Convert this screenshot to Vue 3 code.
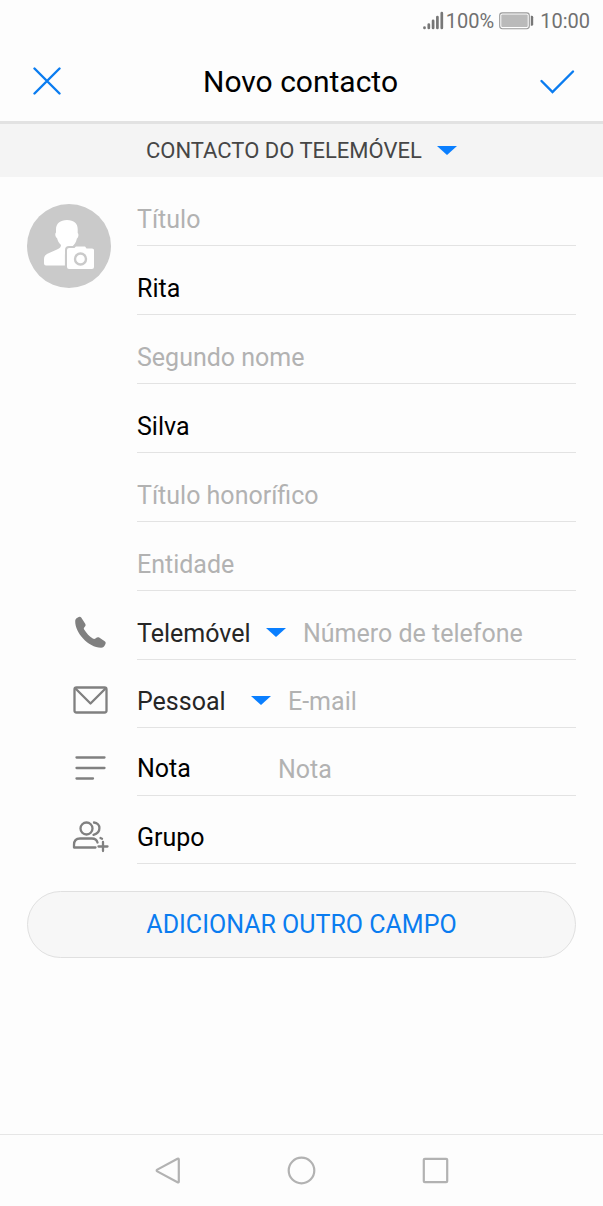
<script setup>
import { reactive, ref } from 'vue'

const account = ref('CONTACTO DO TELEMÓVEL')
const names = reactive([
  { id: 'titulo', label: 'Título', value: '' },
  { id: 'nome', label: 'Nome', value: 'Rita' },
  { id: 'segundo', label: 'Segundo nome', value: '' },
  { id: 'apelido', label: 'Apelido', value: 'Silva' },
  { id: 'honorifico', label: 'Título honorífico', value: '' },
  { id: 'entidade', label: 'Entidade', value: '' },
])
const phoneType = ref('Telemóvel')
const mailType = ref('Pessoal')
const phone = ref('')
const mail = ref('')
const note = ref('')
</script>

<template>
  <div class="screen">
    <div class="status">
      <svg class="signal" width="21" height="20" viewBox="0 0 21 20" aria-hidden="true">
        <path d="M1.500 16.500v.5M5.800 13.500v3.500M10.100 9.800v7.200M14.400 6v11M18.800 2.200v14.800" />
      </svg>
      <span class="percent">100%</span>
      <svg class="battery" width="35" height="18" viewBox="0 0 35 18" aria-hidden="true">
        <rect x="0.700" y="0.900" width="29.600" height="15.800" rx="2.600" fill="#fff" stroke="#999" stroke-width="1.100" />
        <rect x="2.300" y="2.500" width="26.400" height="12.600" rx="1" fill="#bababa" />
        <path d="M31.800 3.800h.8q1.600 0 1.600 1.400v7.200q0 1.400-1.600 1.400h-.8z" fill="#777" />
      </svg>
      <span>10:00</span>
    </div>

    <header class="header">
      <button class="icon-button" type="button" aria-label="Cancelar">
        <svg width="30" height="30" viewBox="0 0 30 30"><path d="M2.500 1.500l25 25M27.500 1.500l-25 25" /></svg>
      </button>
      <h1>Novo contacto</h1>
      <button class="icon-button" type="button" aria-label="Guardar">
        <svg width="36" height="30" viewBox="0 0 36 30"><path d="M2.500 14L13.500 25L34 4.500" /></svg>
      </button>
    </header>

    <div class="account">
      <div class="picker">
        <select v-model="account" aria-label="Conta">
          <option>CONTACTO DO TELEMÓVEL</option>
        </select>
        <svg class="caret" width="20" height="10" viewBox="0 0 20 10" aria-hidden="true"><path d="M0 0h20L10 9z" /></svg>
      </div>
    </div>

    <form class="form" @submit.prevent>
      <div class="identity">
        <button class="avatar" type="button" aria-label="Adicionar fotografia">
          <svg width="84" height="84" viewBox="0 0 84 84">
            <circle cx="42" cy="42" r="42" fill="#cacaca" />
            <path fill="#fff" d="M40 16c7 0 10.700 3.500 10.700 9v4c1.300.8.800 4.500-.8 5.500-.8 4-2.600 6-4 7.500v3.500l-1.500 1h-2q-4 0-4.500 4v11H19q-2 0-2-2v-4c0-3 1-4.500 4-6l9-4c3-1.300 4-2.500 4-4.500-2-2-3.300-4-4-7-1.800-1-2.300-4.500-1-5.500v-3c0-6 4.300-9.500 11-9.500z" />
            <path fill="#fff" stroke="#cacaca" stroke-width="2" d="M42 43h5l1.500-1.500h10l1.500 2h5q3 0 3 2.500V63q0 3-3 3H42q-3 0-3-3V46q0-3 3-3z" />
            <circle cx="53.500" cy="55" r="5.500" fill="#fff" stroke="#cacaca" stroke-width="2.400" />
          </svg>
        </button>
        <div class="names">
          <div v-for="f in names" :key="f.id" class="row tall">
            <input :id="f.id" v-model="f.value" type="text" :placeholder="f.label" :aria-label="f.label" />
          </div>
        </div>
      </div>

      <div class="entry">
        <svg class="mark" width="40" height="40" viewBox="0 0 40 40" aria-hidden="true">
          <path class="solid" d="M5.200 9c0-1.500 1-2.600 2.200-3.200 1.500-1 2.800-1.500 3.800-.3l4 6.200c.8 1.400.4 2.300-.6 3.300-1 1-1 1.800-.3 2.800 2.300 3.700 5 6.500 8.500 8.800 1 .7 2 .6 3-.3s2-1.500 3.400-.8l5.500 3.700c1.400 1 1.100 2.200.4 3.500-.9 1.800-2 3.100-4 3.100C18 35.500 4.900 20.500 5.200 9z" />
        </svg>
        <div class="row">
          <div class="picker phone-type">
            <select v-model="phoneType" aria-label="Tipo de telefone">
              <option>Telemóvel</option>
            </select>
            <svg class="caret" width="20" height="10" viewBox="0 0 20 10" aria-hidden="true"><path d="M0 0h20L10 9z" /></svg>
          </div>
          <input v-model="phone" type="tel" placeholder="Número de telefone" aria-label="Número de telefone" />
        </div>
      </div>

      <div class="entry">
        <svg class="mark" width="40" height="40" viewBox="0 0 40 40" aria-hidden="true">
          <rect x="4.500" y="7.500" width="32" height="25" rx="2" />
          <path d="M5.500 8.500L20.500 23.500L35.500 8.500" />
        </svg>
        <div class="row">
          <div class="picker mail-type">
            <select v-model="mailType" aria-label="Tipo de e-mail">
              <option>Pessoal</option>
            </select>
            <svg class="caret" width="20" height="10" viewBox="0 0 20 10" aria-hidden="true"><path d="M0 0h20L10 9z" /></svg>
          </div>
          <input v-model="mail" type="email" placeholder="E-mail" aria-label="E-mail" />
        </div>
      </div>

      <div class="entry">
        <svg class="mark" width="40" height="40" viewBox="0 0 40 40" aria-hidden="true">
          <path d="M6.500 9.500h28M6.500 20h28M6.500 30.500h16.500" />
        </svg>
        <div class="row">
          <label class="note-label" for="nota">Nota</label>
          <input id="nota" v-model="note" type="text" placeholder="Nota" />
        </div>
      </div>

      <div class="entry">
        <svg class="mark" width="40" height="40" viewBox="0 0 40 40" aria-hidden="true">
          <circle cx="16.500" cy="12.500" r="6" />
          <path d="M24 6.500c6.800.5 7.800 10-.5 12.300M4 31.500v-2.500c0-4 2-6.500 6-6.500h12c3 0 4.800 1.500 5.500 4M4 31.500h21.500M30.500 22l1.500.7M33 26v9M28.500 30.500h9" />
        </svg>
        <div class="row">
          <button class="group" type="button">Grupo</button>
        </div>
      </div>

      <button class="add" type="button">ADICIONAR OUTRO CAMPO</button>
    </form>

    <nav class="nav" aria-label="Sistema">
      <button type="button" aria-label="Voltar">
        <svg width="30" height="30" viewBox="0 0 30 30"><path d="M24.500 2.800q1.300-.7 1.300.8v21.800q0 1.500-1.300.8L4.300 15.400q-1.300-.9 0-1.800z" /></svg>
      </button>
      <button type="button" aria-label="Início">
        <svg width="30" height="30" viewBox="0 0 30 30"><circle cx="14.500" cy="14.500" r="12.800" /></svg>
      </button>
      <button type="button" aria-label="Recentes">
        <svg width="30" height="30" viewBox="0 0 30 30"><rect x="2.800" y="2.800" width="23.400" height="23.400" rx="1" /></svg>
      </button>
    </nav>
  </div>
</template>

<style>
body {
  margin: 0;
  background: #fdfdfd;
}
</style>

<style scoped>
.screen {
  display: flex;
  flex-direction: column;
  min-height: 100vh;
  background: #fdfdfd;
  color: #000;
  font-family: Roboto, 'Liberation Sans', sans-serif;
  font-size: 25px;
}
.screen * {
  box-sizing: border-box;
}
svg {
  display: block;
  flex: none;
}
button,
input,
select {
  margin: 0;
  padding: 0;
  border: 0;
  background: none;
  color: inherit;
  font: inherit;
}
.status {
  display: flex;
  align-items: center;
  justify-content: flex-end;
  height: 42px;
  padding-right: 13px;
  color: #717171;
  font-size: 20px;
}
.signal {
  fill: none;
  stroke: #777;
  stroke-width: 2.7;
  stroke-linecap: round;
}
.percent {
  margin: 0 5px 0 2px;
}
.battery {
  margin-right: 6px;
}
.header {
  display: flex;
  align-items: center;
  justify-content: space-between;
  height: 82px;
  padding: 0 28px 0 32px;
  border-bottom: 3px solid #e2e2e2;
}
.header h1 {
  margin: 0;
  font-size: 30px;
  font-weight: 400;
}
.icon-button svg {
  fill: none;
  stroke: #0a7cf0;
  stroke-width: 2.4;
  stroke-linecap: round;
}
.account {
  display: flex;
  align-items: center;
  justify-content: center;
  height: 53px;
  background: #f4f4f4;
  color: #464646;
  font-size: 22px;
}
.picker {
  display: flex;
  align-items: center;
  justify-content: space-between;
  gap: 14px;
  flex: none;
}
select {
  appearance: none;
  height: 36px;
}
.caret {
  fill: #0a7fff;
}
.form {
  flex: 1;
  padding: 0 27px 32px;
}
.identity {
  display: flex;
  gap: 26px;
  margin-bottom: 1px;
}
.avatar {
  align-self: flex-start;
  flex: none;
  width: 84px;
  margin-top: 27px;
}
.names {
  flex: 1;
  min-width: 0;
}
.row {
  display: flex;
  align-items: flex-end;
  flex: 1;
  min-width: 0;
  height: 68px;
  padding-bottom: 8px;
  border-bottom: 1px solid #e3e3e3;
}
.row.tall {
  height: 69px;
}
.row input {
  flex: 1;
  min-width: 0;
  width: 100%;
  height: 36px;
  outline: 0;
}
.row input::placeholder {
  color: #b2b2b2;
  opacity: 1;
}
.entry {
  display: flex;
  align-items: flex-end;
  padding-left: 43px;
  gap: 27px;
}
.mark {
  margin-bottom: 8px;
  fill: none;
  stroke: #808080;
  stroke-width: 2.3;
  stroke-linecap: round;
  stroke-linejoin: round;
}
.mark .solid {
  fill: #808080;
  stroke: none;
}
.phone-type,
.mail-type {
  margin-right: 17px;
  color: #262626;
}
.phone-type {
  width: 149px;
}
.mail-type {
  width: 134px;
}
.note-label {
  width: 141px;
  line-height: 36px;
}
.group {
  height: 36px;
}
.add {
  display: block;
  width: 100%;
  height: 67px;
  margin-top: 27px;
  border: 1px solid #e0e0e0;
  border-radius: 34px;
  background: #f7f7f7;
  color: #0a7cf0;
}
.nav {
  display: flex;
  align-items: center;
  justify-content: center;
  gap: 104px;
  height: 72px;
  border-top: 1px solid #e6e6e6;
}
.nav svg {
  fill: none;
  stroke: #b2b2b2;
  stroke-width: 2.2;
}
</style>
